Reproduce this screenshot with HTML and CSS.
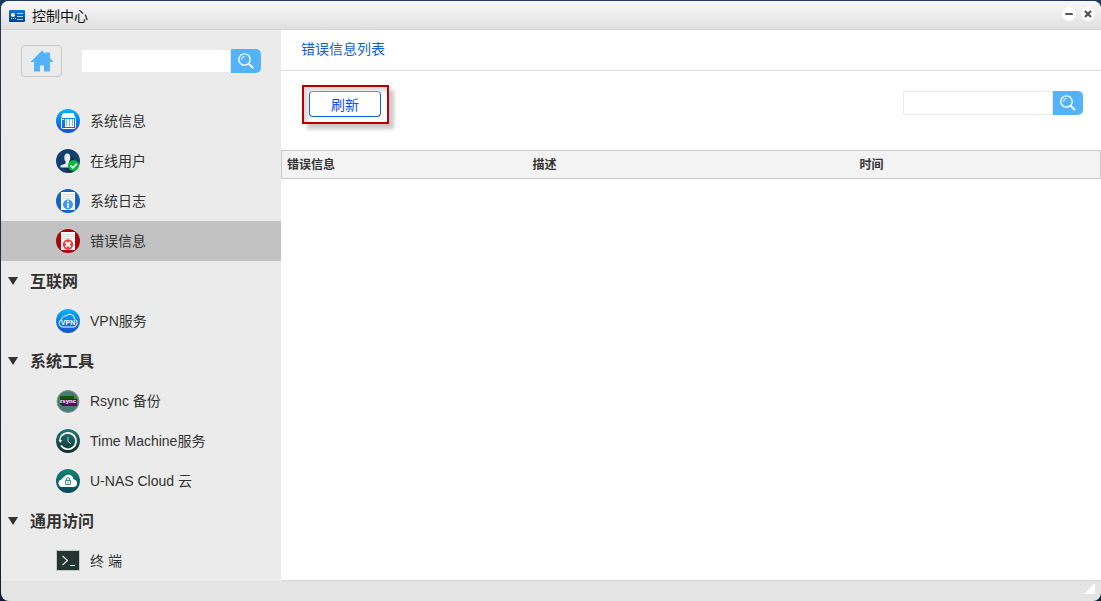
FILE: index.html
```html
<!DOCTYPE html>
<html lang="zh-CN">

<head>
    <meta charset="utf-8">
    <meta name="viewport" content="width=device-width, initial-scale=1.0">
    <title>控制中心</title>
    <link rel="stylesheet" href="styles.css">
</head>

<body>
    <div class="window">
        <header class="title-bar">
            <svg class="title-icon" width="16" height="12" viewBox="0 0 16 12">
                <defs>
                    <linearGradient id="g-title" x1="0" y1="0" x2="0" y2="1">
                        <stop offset="0" stop-color="#0a78dc" />
                        <stop offset="1" stop-color="#003f88" />
                    </linearGradient>
                </defs>
                <rect width="16" height="12" rx="1" fill="url(#g-title)" />
                <circle cx="4" cy="5" r="2" fill="#fff" />
                <path d="M4 5V3a2 2 0 0 1 2 2z" fill="#f5c33b" />
                <path d="M8 3.500h6M8 6.500h6M8 9.500h6" stroke="#a9d0f5" />
                <path d="M2 8.500h1M4 8.500h1M6 8.500h1" stroke="#a9d0f5" />
            </svg>
            <h1 class="title">控制中心</h1>
            <button class="window-button" type="button" aria-label="最小化">
                <svg width="14" height="14" viewBox="0 0 14 14">
                    <path d="M4 7h6" stroke="#555" stroke-width="2" stroke-linecap="round" />
                </svg>
            </button>
            <button class="window-button" type="button" aria-label="关闭">
                <svg width="14" height="14" viewBox="0 0 14 14">
                    <path d="M4 4l6 6M10 4l-6 6" stroke="#555" stroke-width="2.300" />
                </svg>
            </button>
        </header>

        <div class="content">
            <nav class="sidebar">
                <div class="sidebar-tools">
                    <button class="home-button" type="button" aria-label="主页">
                        <svg width="24" height="22" viewBox="0 0 24 22">
                            <path d="M12 0.500L0.500 12H4v9.500h6v-6h4v6h6V12h3.500L20 8V2.500h-5l1 2z" fill="#54b2f8" />
                        </svg>
                    </button>
                    <form class="search">
                        <input class="search-input" type="text" aria-label="搜索功能">
                        <button class="search-button" type="button" aria-label="搜索">
                            <svg width="18" height="18" viewBox="0 0 18 18" fill="none" stroke="#fff">
                                <circle cx="7.500" cy="7.500" r="5.700" stroke-width="1.300" />
                                <path d="M4.500 7.500a3 3 0 0 1 3-3" />
                                <path d="M11.800 11.800l4.200 4.200" stroke-width="1.900" />
                            </svg>
                        </button>
                    </form>
                </div>

                <a class="item" href="#">
                    <svg class="item-icon" viewBox="0 0 24 24">
                        <defs>
                            <linearGradient id="g-blue" x1="0" y1="0" x2="0" y2="1">
                                <stop offset="0" stop-color="#00b4ff" />
                                <stop offset="1" stop-color="#1650c8" />
                            </linearGradient>
                        </defs>
                        <circle cx="12" cy="12" r="12" fill="url(#g-blue)" />
                        <path d="M7 4h10.500L19 8H5z" fill="#fff" />
                        <rect x="5.500" y="8.500" width="14" height="11" rx="1" fill="none" stroke="#fff" />
                        <path d="M9 10h9v8H9z" fill="#fff" />
                        <path d="M10.500 10v7M13.500 10v7M16.500 10v7" stroke="#7dbdf2" />
                        <path d="M6.500 10.500h1.500" stroke="#fff" />
                    </svg>
                    <span class="item-label">系统信息</span>
                </a>
                <a class="item" href="#">
                    <svg class="item-icon" viewBox="0 0 24 24">
                        <circle cx="12" cy="12" r="12" fill="#12406e" />
                        <path d="M13 5l10 10a12 12 0 0 1-9 9l-9-7z" fill="#0b2d52" />
                        <path d="M8.300 8.500c0-2.500 1-4 3-4s3 1.500 3 4c0 2-.6 3.200-1.300 4v2l4.500 2v2H4.500v-2l5-2v-2c-.8-1-1.200-2-1.200-4z" fill="#e6eaf0" />
                        <circle cx="17.500" cy="16.500" r="5.500" fill="#08b83a" />
                        <path d="M14.500 16.500l2.300 2.300 4-4.200" fill="none" stroke="#fff" stroke-width="1.600" />
                    </svg>
                    <span class="item-label">在线用户</span>
                </a>
                <a class="item" href="#">
                    <svg class="item-icon" viewBox="0 0 24 24">
                        <circle cx="12" cy="12" r="12" fill="#1864bd" />
                        <path d="M5 3h14v18H5z" fill="#fff" />
                        <path d="M6 5.500h12M6 7.500h12M6 9.500h12" stroke="#dcdcdc" />
                        <circle cx="12" cy="15.500" r="5" fill="#3f96f4" />
                        <path d="M12 11.500v1.500M12 14v5" stroke="#fff" stroke-width="1.600" />
                    </svg>
                    <span class="item-label">系统日志</span>
                </a>
                <a class="item item-active" href="#" aria-current="page">
                    <svg class="item-icon" viewBox="0 0 24 24">
                        <circle cx="12" cy="12" r="12" fill="#a90808" />
                        <path d="M5 3h14v18H5z" fill="#fff" />
                        <path d="M6 5.500h12M6 7.500h12M6 9.500h12" stroke="#dcdcdc" />
                        <circle cx="12" cy="15.500" r="5.200" fill="#f03c3c" />
                        <path d="M9.500 13l5 5M14.500 13l-5 5" stroke="#fff" stroke-width="2" />
                    </svg>
                    <span class="item-label">错误信息</span>
                </a>

                <details class="group" open>
                    <summary class="group-title"><span class="item-label">互联网</span></summary>
                    <a class="item" href="#">
                        <svg class="item-icon" viewBox="0 0 24 24">
                            <circle cx="12" cy="12" r="12" fill="url(#g-blue)" />
                            <path d="M6 18a4 4 0 0 1-.5-7.500 4 4 0 0 1 4.500-3.500 4.800 4.800 0 0 1 8.500 3A4.200 4.200 0 0 1 18 18z" fill="none" stroke="#fff" />
                            <text class="vpn-text" x="12" y="16" text-anchor="middle" fill="#fff">VPN</text>
                        </svg>
                        <span class="item-label">VPN服务</span>
                    </a>
                </details>

                <details class="group" open>
                    <summary class="group-title"><span class="item-label">系统工具</span></summary>
                    <a class="item" href="#">
                        <svg class="item-icon" viewBox="0 0 24 24">
                            <circle cx="12" cy="12.500" r="11" fill="#427e6d" stroke="#8f9296" />
                            <path d="M4 7h14v9H4z" fill="#12550b" />
                            <path d="M6 10h15v7H6z" fill="#63065f" />
                            <text class="rsync-text" x="12" y="14" text-anchor="middle" fill="#fff">rsync</text>
                        </svg>
                        <span class="item-label">Rsync 备份</span>
                    </a>
                    <a class="item" href="#">
                        <svg class="item-icon" viewBox="0 0 24 24">
                            <defs>
                                <linearGradient id="g-time" x1="0" y1="0" x2="0" y2="1">
                                    <stop offset="0" stop-color="#1b7d74" />
                                    <stop offset="1" stop-color="#132c30" />
                                </linearGradient>
                            </defs>
                            <circle cx="12" cy="12" r="12" fill="url(#g-time)" />
                            <path d="M6 6.300A8.200 8.200 0 1 1 5 16.500" fill="none" stroke="#fff" stroke-width="1.700" />
                            <path d="M6.500 5.500A8.500 8.500 0 0 0 3.800 12" fill="none" stroke="#fff" stroke-width="1.200" />
                            <path d="M2.500 11h3.500l-1.500 3z" fill="#fff" />
                            <path d="M12 8v4.500l3 2.500" fill="none" stroke="#b9d4d2" />
                        </svg>
                        <span class="item-label">Time Machine服务</span>
                    </a>
                    <a class="item" href="#">
                        <svg class="item-icon" viewBox="0 0 24 24">
                            <defs>
                                <linearGradient id="g-cloud" x1="0" y1="0" x2="0" y2="1">
                                    <stop offset="0" stop-color="#128674" />
                                    <stop offset="1" stop-color="#07475c" />
                                </linearGradient>
                            </defs>
                            <circle cx="12" cy="12" r="12" fill="url(#g-cloud)" />
                            <path d="M6 18a3.800 3.800 0 0 1-.5-7.500A4 4 0 0 1 8 8a5.200 5.200 0 0 1 9.500 2.500A3.800 3.800 0 0 1 18 18z" fill="#fff" />
                            <path d="M9.500 11.500h5v4h-5zM10.500 11v-1a1.500 1.500 0 0 1 3 0v1M12 12.500v2" fill="none" stroke="#3a8a84" />
                        </svg>
                        <span class="item-label">U-NAS Cloud 云</span>
                    </a>
                </details>

                <details class="group" open>
                    <summary class="group-title"><span class="item-label">通用访问</span></summary>
                    <a class="item" href="#">
                        <svg class="item-icon" viewBox="0 0 24 24">
                            <rect x="0.500" y="1.500" width="23" height="20" fill="#233531" stroke="#c6c8c7" />
                            <path d="M6.500 7l5 4.500-5 4.500M14 16.500h5" fill="none" stroke="#e4e8e7" stroke-width="1.200" />
                        </svg>
                        <span class="item-label">终 端</span>
                    </a>
                </details>
            </nav>

            <main class="main">
                <h2 class="main-title">错误信息列表</h2>
                <div class="toolbar">
                    <div class="highlight">
                        <button class="refresh-button" type="button">刷新</button>
                    </div>
                    <form class="search">
                        <input class="search-input" type="text" aria-label="搜索错误信息">
                        <button class="search-button" type="button" aria-label="搜索">
                            <svg width="18" height="18" viewBox="0 0 18 18" fill="none" stroke="#fff">
                                <circle cx="7.500" cy="7.500" r="5.700" stroke-width="1.300" />
                                <path d="M4.500 7.500a3 3 0 0 1 3-3" />
                                <path d="M11.800 11.800l4.200 4.200" stroke-width="1.900" />
                            </svg>
                        </button>
                    </form>
                </div>
                <div class="table-frame">
                    <table class="error-table">
                        <thead>
                            <tr>
                                <th class="col-error">错误信息</th>
                                <th class="col-desc">描述</th>
                                <th class="col-time">时间</th>
                            </tr>
                        </thead>
                        <tbody></tbody>
                    </table>
                </div>
            </main>
        </div>

        <footer class="status-bar">
            <svg width="11" height="11" viewBox="0 0 11 11">
                <path d="M11 0v11H0z" fill="#fff" />
            </svg>
        </footer>
    </div>
</body>

</html>
```

FILE: styles.css
```css
* {
    box-sizing: border-box;
}

body {
    margin: 0;
    background: linear-gradient(#1f3a5c, #0c1f38);
    font-family: "Liberation Sans", "Noto Sans CJK SC", sans-serif;
    font-size: 14px;
    color: #333;
}

button {
    padding: 0;
    border: none;
    font-family: inherit;
    cursor: pointer;
}

svg {
    display: block;
}

.window {
    display: flex;
    flex-direction: column;
    min-height: calc(100vh - 1px);
    margin: 1px 0 0 1px;
    border-radius: 8px;
    background-color: #e4e4e4;
    overflow: hidden;
}

/* title bar */
.title-bar {
    display: flex;
    align-items: center;
    height: 29px;
    padding: 0 6px 0 8px;
    border-bottom: 1px solid #d6d6d6;
    background: linear-gradient(#f8f8f8, #e0e0e0);
}

.title-icon {
    margin-top: 2px;
}

.title {
    flex: 1;
    margin: 2px 0 0 7px;
    font-size: 14px;
    line-height: 20px;
    font-weight: normal;
    color: #111;
}

.window-button {
    width: 14px;
    height: 14px;
    margin: 0 0 2px 5px;
    border-radius: 50%;
    background-color: #fff;
}

.content {
    display: flex;
    flex: 1;
}

/* sidebar */
.sidebar {
    flex: none;
    width: 280px;
    background-color: #ebebeb;
}

.sidebar-tools {
    display: flex;
    align-items: center;
    justify-content: space-between;
    height: 71px;
    padding: 0 20px 9px;
}

.home-button {
    display: flex;
    align-items: center;
    justify-content: center;
    width: 41px;
    height: 32px;
    border: 1px solid #c8c8c8;
    border-radius: 4px;
    background-color: #ebebeb;
}

.search {
    display: flex;
    margin: 0;
}

.search-input {
    width: 150px;
    height: 24px;
    padding: 0 4px;
    border: 1px solid #ebebeb;
    background-color: #fff;
    font-size: 14px;
}

.search-button {
    display: flex;
    align-items: center;
    justify-content: center;
    width: 30px;
    height: 24px;
    border-radius: 0 5px 5px 0;
    background-color: #54b2f8;
}

.item {
    display: flex;
    align-items: center;
    height: 40px;
    padding-left: 55px;
    color: #333;
    text-decoration: none;
    white-space: nowrap;
}

.item-active {
    background-color: #c2c2c2;
}

.item-icon {
    width: 24px;
    height: 24px;
    margin-right: 10px;
}

.item-label {
    padding-bottom: 2px;
}

.vpn-text {
    font-size: 7px;
    font-weight: bold;
}

.rsync-text {
    font-size: 6px;
    font-weight: bold;
}

.group-title {
    display: flex;
    align-items: center;
    height: 40px;
    padding-left: 7px;
    font-size: 16px;
    font-weight: bold;
    list-style: none;
    cursor: pointer;
}

.group-title::before {
    content: "";
    margin-right: 12px;
    border: 5px solid transparent;
    border-top: 8px solid #333;
    border-bottom: none;
}

/* main panel */
.main {
    flex: 1;
    min-width: 0;
    border-bottom: 1px solid #d6d6d6;
    background-color: #fff;
}

.main-title {
    height: 41px;
    margin: 0;
    padding-left: 20px;
    border-bottom: 1px solid #ddd;
    font-size: 14px;
    font-weight: normal;
    line-height: 38px;
    color: #0f5fe0;
}

.toolbar {
    display: flex;
    align-items: flex-start;
    justify-content: space-between;
    padding: 14px 18px 26px 21px;
}

.toolbar .search {
    margin-top: 6px;
}

.highlight {
    padding: 4px 6px 5px 5px;
    border: 2px solid #b80000;
    box-shadow: 5px 5px 4px rgba(0, 0, 0, 0.22), inset 4px 4px 4px rgba(0, 0, 0, 0.15);
}

.refresh-button {
    display: block;
    width: 72px;
    height: 26px;
    border: 1px solid #0f5fe0;
    border-top-color: #5596ea;
    border-radius: 4px;
    background-color: #fff;
    font-size: 14px;
    color: #0a50ff;
}

.table-frame {
    border: 1px solid #c8c8c8;
    background-color: #f3f3f3;
}

.error-table {
    width: 100%;
    border-collapse: collapse;
    table-layout: fixed;
}

.error-table th {
    height: 27px;
    padding: 0 5px 2px;
    font-size: 12px;
    text-align: left;
}

.col-error,
.col-time {
    width: 30%;
}

.col-desc {
    width: 40%;
}

/* bottom bar with the resize grip */
.status-bar {
    display: flex;
    justify-content: flex-end;
    height: 20px;
    padding: 2px 6px 0 0;
}
```
